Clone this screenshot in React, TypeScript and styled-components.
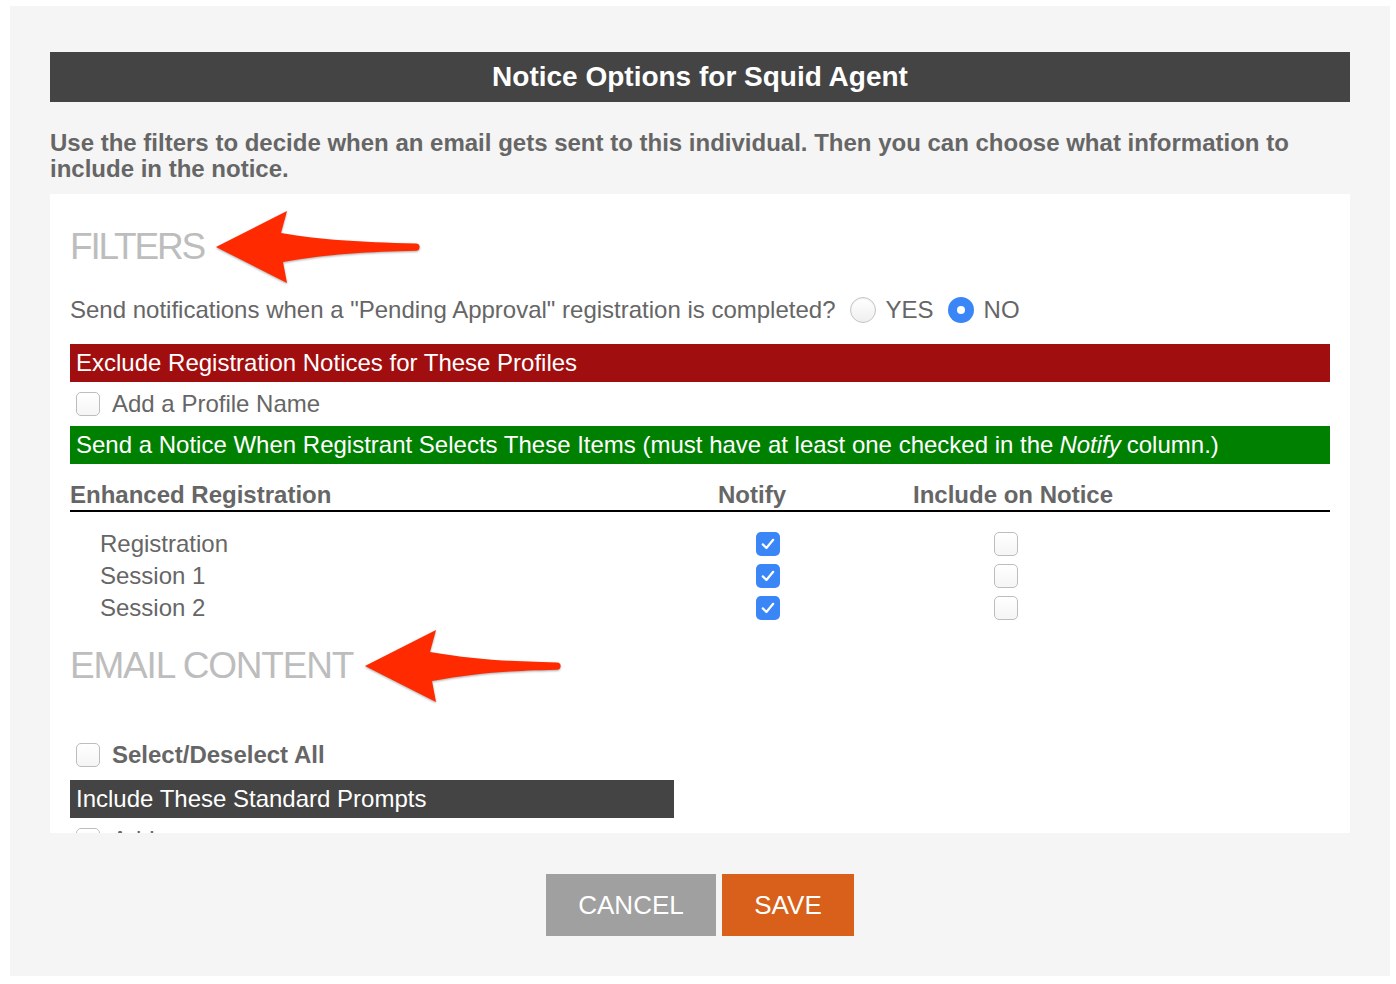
import React from 'react';
import styled, { createGlobalStyle } from 'styled-components';

const GlobalStyle = createGlobalStyle`
  html, body {
    margin: 0;
    padding: 0;
    background: #ffffff;
  }
  body {
    font-family: 'Liberation Sans', Arial, Helvetica, sans-serif;
    color: #666666;
  }
`;

const Modal = styled.div`
  width: 1380px;
  margin: 6px 0 8px 10px;
  padding: 46px 40px 40px;
  box-sizing: border-box;
  background: #f5f5f5;
`;

const TitleBar = styled.h1`
  margin: 0;
  height: 50px;
  display: flex;
  align-items: center;
  justify-content: center;
  background: #444444;
  color: #ffffff;
  font-size: 28px;
  font-weight: bold;
`;

const Intro = styled.p`
  margin: 0;
  padding: 28px 0 12px;
  font-size: 24px;
  line-height: 26px;
  font-weight: bold;
  color: #666666;
`;

const Content = styled.div`
  height: 639px;
  overflow: hidden;
  background: #ffffff;
  padding: 0 20px;
`;

const SectionHeading = styled.div<{ $top: number }>`
  display: flex;
  align-items: center;
  height: 40px;
  margin-top: ${(p) => p.$top}px;
`;

const HeadingText = styled.h2<{ $spacing: number }>`
  margin: 0;
  font-size: 37px;
  line-height: 40px;
  letter-spacing: ${(p) => p.$spacing}px;
  font-weight: normal;
  color: #bdbdbd;
`;

const ArrowSvg = styled.svg`
  flex-shrink: 0;
  margin: -20px 0 -20px 9px;
  overflow: visible;
  filter: drop-shadow(0 1px 1px rgba(0, 0, 0, 0.35));
`;

const Question = styled.div`
  display: flex;
  align-items: center;
  margin-top: 27px;
  height: 32px;
  font-size: 24px;
`;

const Radio = styled.span<{ $checked?: boolean }>`
  box-sizing: border-box;
  width: 26px;
  height: 26px;
  border-radius: 50%;
  margin: 0 10px 0 14px;
  display: inline-flex;
  align-items: center;
  justify-content: center;
  background: ${(p) => (p.$checked ? '#3b86f7' : 'linear-gradient(#ffffff, #efefef)')};
  border: ${(p) => (p.$checked ? 'none' : '1px solid #c4c4c4')};
  box-shadow: ${(p) => (p.$checked ? 'none' : 'inset 0 1px 1px rgba(0, 0, 0, 0.06)')};

  &::after {
    content: '';
    display: ${(p) => (p.$checked ? 'block' : 'none')};
    width: 8px;
    height: 8px;
    border-radius: 50%;
    background: #ffffff;
  }
`;

const Band = styled.div<{ $bg: string; $width?: string; $top?: number }>`
  box-sizing: border-box;
  height: 38px;
  width: ${(p) => p.$width || '100%'};
  margin-top: ${(p) => p.$top || 0}px;
  padding-left: 6px;
  display: flex;
  align-items: center;
  background: ${(p) => p.$bg};
  color: #ffffff;
  font-size: 24px;
  white-space: nowrap;

  em {
    margin: 0 6px;
  }
`;

const CheckRow = styled.label<{ $bold?: boolean; $top?: number }>`
  display: flex;
  align-items: center;
  height: 44px;
  margin-top: ${(p) => p.$top || 0}px;
  padding-left: 6px;
  gap: 12px;
  font-size: 24px;
  font-weight: ${(p) => (p.$bold ? 'bold' : 'normal')};
  color: #666666;
`;

const Box = styled.span<{ $checked?: boolean }>`
  box-sizing: border-box;
  width: 24px;
  height: 24px;
  border-radius: 5px;
  display: inline-flex;
  align-items: center;
  justify-content: center;
  flex-shrink: 0;
  background: ${(p) => (p.$checked ? '#3b86f7' : 'linear-gradient(#ffffff, #f5f5f5)')};
  border: ${(p) => (p.$checked ? 'none' : '1px solid #bdbdbd')};
`;

const TableHead = styled.div`
  display: grid;
  grid-template-columns: 582px 200px 322px 1fr;
  margin-top: 16px;
  height: 30px;
  align-items: center;
  border-bottom: 2px solid #000000;
  font-size: 24px;
  font-weight: bold;
  color: #666666;
`;

const HeadCell = styled.div<{ $center?: boolean }>`
  text-align: ${(p) => (p.$center ? 'center' : 'left')};
`;

const TableBody = styled.div`
  margin-top: 16px;
`;

const ItemRow = styled.div`
  display: grid;
  grid-template-columns: 30px 656px 24px 214px 24px;
  align-items: center;
  height: 32px;
  font-size: 24px;
  color: #666666;
`;

const ItemName = styled.span`
  grid-column: 2;
`;

const Buttons = styled.div`
  display: flex;
  justify-content: center;
  gap: 6px;
  margin-top: 41px;
`;

const Button = styled.button<{ $bg: string; $width: number }>`
  width: ${(p) => p.$width}px;
  height: 62px;
  border: none;
  background: ${(p) => p.$bg};
  color: #ffffff;
  font-family: 'Liberation Sans', Arial, sans-serif;
  font-size: 26px;
  cursor: pointer;
`;

const Check = () => (
  <svg width="14" height="12" viewBox="0 0 14 12">
    <path d="M1.8 6.4 L5.4 10 L12.2 1.8" fill="none" stroke="#ffffff" strokeWidth="2.2" strokeLinecap="round" strokeLinejoin="round" />
  </svg>
);

// red call-out arrow pointing left at a section heading
const Arrow = ({ width }: { width: number }) => {
  const e = width - 3;
  return (
    <ArrowSvg width={width} height="76" viewBox={`0 0 ${width} 76`}>
      <path
        d={`M3 38 L74 2 L68 24 C110 31 ${e - 60} 33 ${e} 34.5 A3.6 3.6 0 0 1 ${e} 41.7 C${e - 60} 43 110 46 70 53 L74 74 Z`}
        fill="#ff2a00"
      />
    </ArrowSvg>
  );
};

const items = ['Registration', 'Session 1', 'Session 2'];

export default function App() {
  return (
    <>
      <GlobalStyle />
      <Modal>
        <TitleBar>Notice Options for Squid Agent</TitleBar>
        <Intro>
          Use the filters to decide when an email gets sent to this individual. Then you can choose what
          information to include in the notice.
        </Intro>
        <Content>
          <SectionHeading $top={33}>
            <HeadingText $spacing={-2.2}>FILTERS</HeadingText>
            <Arrow width={206} />
          </SectionHeading>

          <Question>
            Send notifications when a "Pending Approval" registration is completed?
            <Radio />
            YES
            <Radio $checked />
            NO
          </Question>

          <Band $bg="#a10e0f" $top={18}>Exclude Registration Notices for These Profiles</Band>
          <CheckRow>
            <Box />
            Add a Profile Name
          </CheckRow>
          <Band $bg="#008000">
            Send a Notice When Registrant Selects These Items (must have at least one checked in the
            <em>Notify</em>column.)
          </Band>

          <TableHead>
            <HeadCell>Enhanced Registration</HeadCell>
            <HeadCell $center>Notify</HeadCell>
            <HeadCell $center>Include on Notice</HeadCell>
            <HeadCell />
          </TableHead>
          <TableBody>
            {items.map((name) => (
              <ItemRow key={name}>
                <ItemName>{name}</ItemName>
                <Box $checked>
                  <Check />
                </Box>
                <span />
                <Box />
              </ItemRow>
            ))}
          </TableBody>

          <SectionHeading $top={22}>
            <HeadingText $spacing={-1.2}>EMAIL CONTENT</HeadingText>
            <Arrow width={198} />
          </SectionHeading>

          <CheckRow $bold $top={47}>
            <Box />
            Select/Deselect All
          </CheckRow>
          <Band $bg="#444444" $width="604px" $top={3}>Include These Standard Prompts</Band>
          <CheckRow>
            <Box />
            Address
          </CheckRow>
        </Content>
        <Buttons>
          <Button $bg="#a0a0a0" $width={170}>CANCEL</Button>
          <Button $bg="#d9601a" $width={132}>SAVE</Button>
        </Buttons>
      </Modal>
    </>
  );
}
